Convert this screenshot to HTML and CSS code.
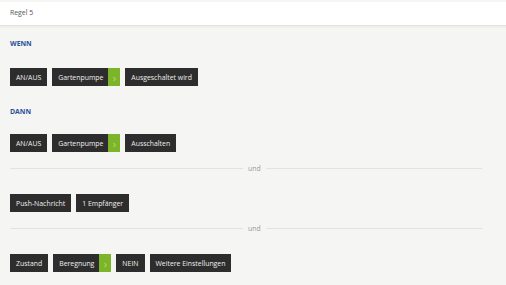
FILE: index.html
```html
<!DOCTYPE html>
<html lang="de">
<head>
    <meta charset="UTF-8">
    <meta name="viewport" content="width=device-width, initial-scale=1.0">
    <title>Regel 5</title>
    <link rel="stylesheet" href="styles.css">
</head>
<body>
<div class="header">Regel 5</div>

<div class="rule">
    <div class="label label-if">WENN</div>
    <div class="chips">
        <span class="chip">AN/AUS</span>
        <span class="chip chip-next">Gartenpumpe<span class="arrow">&rsaquo;</span></span>
        <span class="chip">Ausgeschaltet wird</span>
    </div>

    <div class="label label-then">DANN</div>
    <div class="chips">
        <span class="chip">AN/AUS</span>
        <span class="chip chip-next">Gartenpumpe<span class="arrow">&rsaquo;</span></span>
        <span class="chip">Ausschalten</span>
    </div>

    <div class="divider"><span>und</span></div>
    <div class="chips">
        <span class="chip">Push-Nachricht</span>
        <span class="chip">1 Empfänger</span>
    </div>

    <div class="divider"><span>und</span></div>
    <div class="chips">
        <span class="chip">Zustand</span>
        <span class="chip chip-next">Beregnung<span class="arrow">&rsaquo;</span></span>
        <span class="chip">NEIN</span>
        <span class="chip">Weitere Einstellungen</span>
    </div>
</div>
</body>
</html>
```
FILE: styles.css
```css
body {
    margin: 0;
    font-family: "Open Sans", "Noto Sans", sans-serif;
    font-size: 6.9px;
    background-color: #f5f5f3;
    color: #333;
}

.header {
    margin-top: 2px;
    height: 23px;
    line-height: 22px;
    padding-left: 10px;
    background: #fff;
    border-bottom: 1px solid #e2e2e0;
    box-shadow: 0 2px 0 #efefed;
    color: #555;
}

.rule {
    padding: 0 24px 0 10px;
}

.label {
    font-weight: 700;
    color: #2a5298;
    height: 10px;
    line-height: 10px;
}

.label-if {
    margin-top: 13px;
}

.label-then {
    margin-top: 21px;
}

.chips {
    display: flex;
    gap: 5px;
    margin-top: 19px;
}

.label-then + .chips {
    margin-top: 17px;
}

.divider + .chips {
    margin-top: 21px;
}

.chip {
    display: flex;
    align-items: center;
    height: 18px;
    padding: 0 6px;
    background: #2d2d2d;
    color: #eee;
}

.chip-next {
    padding-right: 0;
}

.arrow {
    display: flex;
    align-items: center;
    justify-content: center;
    width: 12px;
    height: 18px;
    margin-left: 5px;
    background: #7db52a;
    color: #b6dc6e;
    font-size: 11px;
}

.divider {
    display: flex;
    align-items: center;
    gap: 5px;
    height: 10px;
    margin-top: 11px;
    color: #999;
}

.divider::before,
.divider::after {
    content: "";
    flex: 1;
    border-top: 1px solid #e2e2e0;
}

.divider::before {
    flex: 0 0 233px;
}
```
